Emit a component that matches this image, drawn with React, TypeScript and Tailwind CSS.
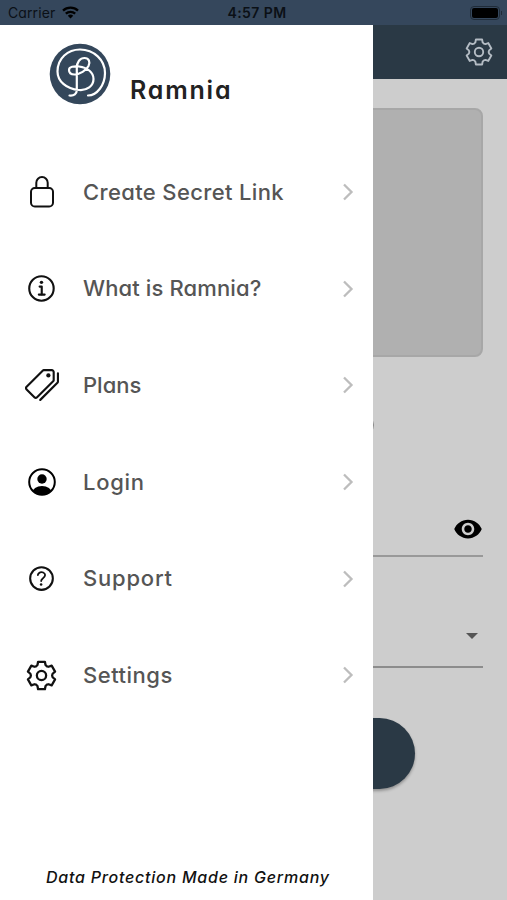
import React from "react";
import { IoPricetagsOutline, IoInformationCircleOutline, IoHelpCircleOutline } from "react-icons/io5";
import { MdRemoveRedEye } from "react-icons/md";

const gearOutline = (() => {
  const points: string[] = [];
  for (let tooth = 0; tooth < 6; tooth++) {
    const corners = [
      [-21, 10.9],
      [-14, 13.7],
      [14, 13.7],
      [21, 10.9],
      [30, 10.3],
    ];
    for (const [offset, radius] of corners) {
      const angle = ((tooth * 60 + offset) * Math.PI) / 180;
      points.push(`${(16 + radius * Math.sin(angle)).toFixed(2)},${(16 - radius * Math.cos(angle)).toFixed(2)}`);
    }
  }
  return points.join(" ");
})();

function Gear({ size, stroke }: { size: number; stroke: number }) {
  return (
    <svg width={size} height={size} viewBox="0 0 32 32" fill="none" stroke="currentColor" strokeWidth={stroke} strokeLinejoin="round">
      <polygon points={gearOutline} />
      <circle cx="16" cy="16" r="4.5" />
    </svg>
  );
}

function LockIcon() {
  return (
    <svg width="26" height="34" viewBox="0 0 26 34" fill="none" stroke="#111" strokeWidth="2">
      <rect x="2" y="13" width="22" height="18.5" rx="3.8" />
      <path d="M7.3 13V7.7a5.7 5.7 0 0 1 11.4 0V13" />
    </svg>
  );
}

function PersonIcon() {
  return (
    <svg width="28" height="28" viewBox="0 0 28 28">
      <defs>
        <clipPath id="face">
          <circle cx="14" cy="14" r="13" />
        </clipPath>
      </defs>
      <circle cx="14" cy="11" r="4.7" fill="#000" />
      <ellipse cx="14" cy="25" rx="9.8" ry="7" fill="#000" clipPath="url(#face)" />
      <circle cx="14" cy="14" r="12.8" fill="none" stroke="#000" strokeWidth="2" />
    </svg>
  );
}

function Logo() {
  return (
    <svg width="62" height="62" viewBox="0 0 62 62" fill="none" stroke="#fff" strokeWidth="2.2" strokeLinecap="round">
      <circle cx="31" cy="31" r="30.3" fill="#34475b" stroke="none" />
      <path d="M20.500 52.500C25 53 27.800 51 27.800 47V25C27.800 19 31 15 35.500 15C40 15 41.500 19 39.500 23C37 27.500 31 31.500 25.500 31.500C21 31.500 20 29 20 27C20 23.500 25 23 30 23.500C38 24.500 44.500 29 44.500 36C44.500 43 38 47.800 30 47C17 46 8.500 38 8.500 28.500C8.500 15 19 6.500 31 6.500C45 6.500 56 17 56 30C56 42 48 52.500 39 52.500" />
    </svg>
  );
}

const items = [
  { label: "Create Secret Link", icon: <LockIcon />, track: "tracking-[0.36px]" },
  { label: "What is Ramnia?", icon: <IoInformationCircleOutline size={34} />, track: "tracking-[0.12px]" },
  { label: "Plans", icon: <IoPricetagsOutline size={34} />, track: "tracking-[0px]" },
  { label: "Login", icon: <PersonIcon />, track: "tracking-[0.7px]" },
  { label: "Support", icon: <IoHelpCircleOutline size={33} />, track: "tracking-[0.8px]" },
  { label: "Settings", icon: <Gear size={33} stroke={2.2} />, track: "tracking-[0.5px]" },
];

export default function App() {
  return (
    <div className="relative flex h-[900px] w-[507px] flex-col overflow-hidden bg-[#cdcdcd] font-['Inter',sans-serif] [font-feature-settings:'cv11']">
      <div className="grid h-[25px] shrink-0 grid-cols-3 items-center bg-[#35475c] pr-[5px] pl-2 text-[#0b1016]">
        <div className="flex items-center gap-[7px] text-[14px] tracking-[0.1px]">
          Carrier
          <svg width="17" height="13" viewBox="0 0 17 13" fill="none" stroke="#000" strokeWidth="2.300">
            <path d="M1 4.600a11 11 0 0 1 15 0M3.800 7.600a7 7 0 0 1 9.400 0" />
            <path d="M8.500 12.500L5.800 9.700a4 4 0 0 1 5.400 0z" fill="#000" stroke="none" />
          </svg>
        </div>
        <div className="pl-1 text-center text-[14px] font-semibold tracking-[0.4px] whitespace-nowrap">4:57 PM</div>
        <div className="flex items-center justify-end gap-px">
          <div className="h-[14px] w-[30px] rounded-[4px] border border-[#202c39] p-px">
            <div className="h-full rounded-[2px] bg-black" />
          </div>
          <div className="h-1 w-px bg-[#202c39]" />
        </div>
      </div>
      <header className="flex h-[54px] shrink-0 items-center justify-end bg-[#2a3945] pr-[13px] text-[#b4bcc4]">
        <Gear size={30} stroke={2} />
      </header>
      <main className="flex flex-col px-[24px]">
        <div className="mt-[29px] h-[249px] rounded-[8px] border-2 border-[#a7a7a7] bg-[#b0b0b0]" />
        <div className="mt-[58px] ml-[330px] h-5 w-5 rounded-full border-2 border-[#888]" />
        <div className="mt-[74px] flex h-[48px] items-center justify-end border-b-2 border-[#999] pb-[7px]">
          <MdRemoveRedEye size={30} color="#000" />
        </div>
        <div className="flex h-[111px] items-end justify-end border-b-2 border-[#8c8c8c] pr-[5px] pb-[27px]">
          <div className="h-0 w-0 border-x-[6px] border-t-[6px] border-x-transparent border-t-[#555]" />
        </div>
        <div className="mx-auto mt-[50px] h-[71px] w-[323px] rounded-full bg-[#2a3945] shadow-[0_2px_3px_rgba(0,0,0,0.3)]" />
      </main>
      <aside className="absolute top-[25px] left-0 flex h-[875px] w-[372.500px] flex-col bg-white">
        <div className="flex h-[119px] pt-[18px] pl-[49px]">
          <Logo />
          <h1 className="mt-[30px] ml-[19px] text-[25px] leading-[34px] font-semibold tracking-[1.800px] text-[#222]">Ramnia</h1>
        </div>
        <nav className="flex flex-col">
          {items.map((item) => (
            <a key={item.label} className="flex h-[96.600px] items-center pr-[18px]">
              <span className="flex w-[83px] justify-center text-[#111]">{item.icon}</span>
              <span className={"flex-1 text-[22px] font-medium whitespace-nowrap text-[#555] " + item.track}>{item.label}</span>
              <svg width="14" height="20" viewBox="0 0 14 20" fill="none" stroke="#bdbdbd" strokeWidth="2.300">
                <path d="M3 2.500l7.500 7.500-7.500 7.500" />
              </svg>
            </a>
          ))}
        </nav>
        <p className="mt-auto mb-[11px] ml-[46px] text-[16px] leading-6 font-medium tracking-[0.770px] whitespace-nowrap text-[#111] italic">Data Protection Made in Germany</p>
      </aside>
    </div>
  );
}
